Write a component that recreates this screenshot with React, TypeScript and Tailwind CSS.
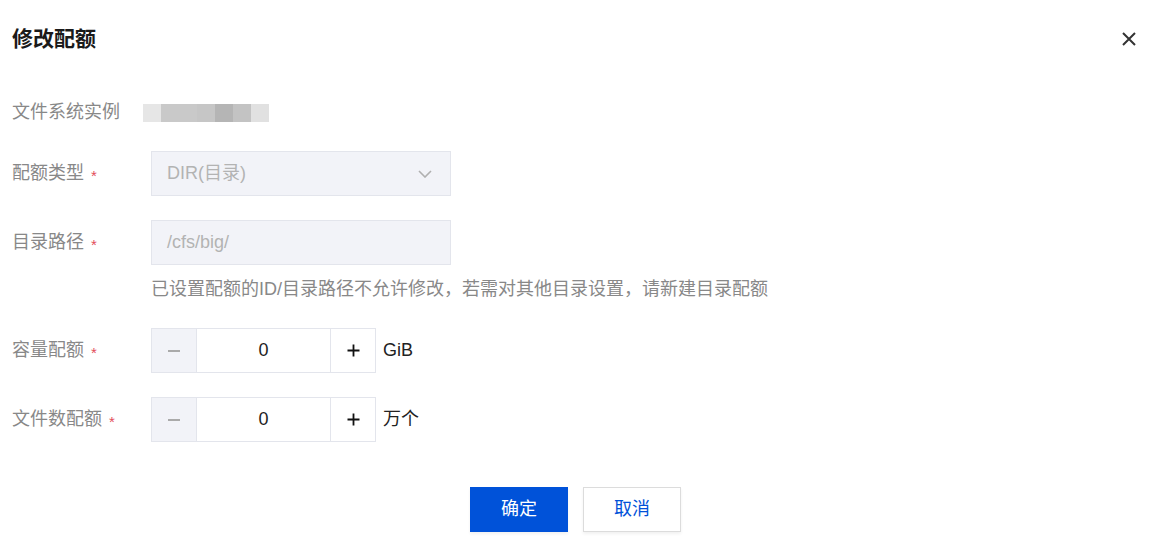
import React, { useState } from "react";

const font = { fontFamily: '"Liberation Sans", "Noto Sans CJK SC", sans-serif' };

function Label({ text, required }: { text: string; required?: boolean }) {
  return (
    <div className="w-[139px] shrink-0 flex items-center text-[18px] text-[#888888]">
      <span>{text}</span>
      {required && <span className="ml-[7px] text-[15px] text-[#e34d59] leading-none mt-[4px]">*</span>}
    </div>
  );
}

function Stepper({ value, unit, onChange }: { value: number; unit: string; onChange: (v: number) => void }) {
  return (
    <div className="flex items-center">
      <div className="flex h-[45px] w-[225px] border border-[#e3e5ec]">
        <button
          className="w-[45px] bg-[#f2f3f8] border-r border-[#e3e5ec] flex items-center justify-center"
          onClick={() => onChange(Math.max(0, value - 1))}
        >
          <span className="block w-[12px] h-[2px] bg-[#aaaaaa]" />
        </button>
        <div className="flex-1 flex items-center justify-center text-[18px] text-[#222222]">{value}</div>
        <button
          className="w-[45px] border-l border-[#e3e5ec] flex items-center justify-center"
          onClick={() => onChange(value + 1)}
        >
          <svg width="13" height="13" viewBox="0 0 13 13">
            <path d="M6.5 0.5v12M0.5 6.5h12" stroke="#111" strokeWidth="1.8" />
          </svg>
        </button>
      </div>
      <span className="ml-[7px] text-[18px] text-[#222222]">{unit}</span>
    </div>
  );
}

export default function App() {
  const [cap, setCap] = useState(0);
  const [files, setFiles] = useState(0);

  return (
    <div className="w-[1162px] h-[548px] bg-white overflow-hidden" style={font}>
      {/* 标题 */}
      <div className="h-[78px] flex items-center justify-between pl-[12px] pr-[26px]">
        <h1 className="text-[21px] font-bold text-[#1a1a1a]">修改配额</h1>
        <svg width="14" height="14" viewBox="0 0 14 14">
          <path d="M1 1l12 12M13 1L1 13" stroke="#333" strokeWidth="2" />
        </svg>
      </div>

      <div className="pl-[12px] mt-[12px] flex flex-col">
        <div className="flex h-[45px] items-center">
          <span className="text-[18px] text-[#888888]">文件系统实例</span>
          <div className="flex h-[18px] ml-[23px]">
            <span className="w-[18px] bg-[#e6e6e6]" />
            <span className="w-[36px] bg-[#c9c9c9]" />
            <span className="w-[18px] bg-[#c6c6c6]" />
            <span className="w-[18px] bg-[#b5b5b5]" />
            <span className="w-[18px] bg-[#c3c3c3]" />
            <span className="w-[18px] bg-[#e1e1e1]" />
          </div>
        </div>

        <div className="flex mt-[16px]">
          <Label text="配额类型" required />
          <div className="w-[300px] h-[45px] bg-[#f2f3f8] border border-[#e3e5ec] flex items-center justify-between pl-[15px] pr-[18px] text-[18px] text-[#b3b3b3]">
            <span>DIR(目录)</span>
            <svg width="14" height="8" viewBox="0 0 14 8">
              <path d="M1 1l6 6 6-6" fill="none" stroke="#b0b0b0" strokeWidth="1.6" />
            </svg>
          </div>
        </div>

        <div className="flex mt-[24px]">
          <Label text="目录路径" required />
          <div className="w-[300px] h-[45px] bg-[#f2f3f8] border border-[#e3e5ec] flex items-center pl-[15px] text-[18px] text-[#b3b3b3]">
            /cfs/big/
          </div>
        </div>

        <div className="ml-[139px] mt-[11px] text-[18px] leading-[27px] text-[#888888]">
          已设置配额的ID/目录路径不允许修改，若需对其他目录设置，请新建目录配额
        </div>

        <div className="flex mt-[25px]">
          <Label text="容量配额" required />
          <Stepper value={cap} unit="GiB" onChange={setCap} />
        </div>

        <div className="flex mt-[24px]">
          <Label text="文件数配额" required />
          <Stepper value={files} unit="万个" onChange={setFiles} />
        </div>
      </div>

      <div className="flex justify-center gap-[15px] pl-[12px] pr-[23px] mt-[45px]">
        <button className="w-[98px] h-[45px] bg-[#0052d9] text-white text-[18px] shadow-[0_2px_3px_rgba(0,0,0,0.06)]">确定</button>
        <button className="w-[98px] h-[45px] bg-white border border-[#dcdcdc] text-[#0052d9] text-[18px] shadow-[0_2px_3px_rgba(0,0,0,0.06)]">取消</button>
      </div>
    </div>
  );
}
